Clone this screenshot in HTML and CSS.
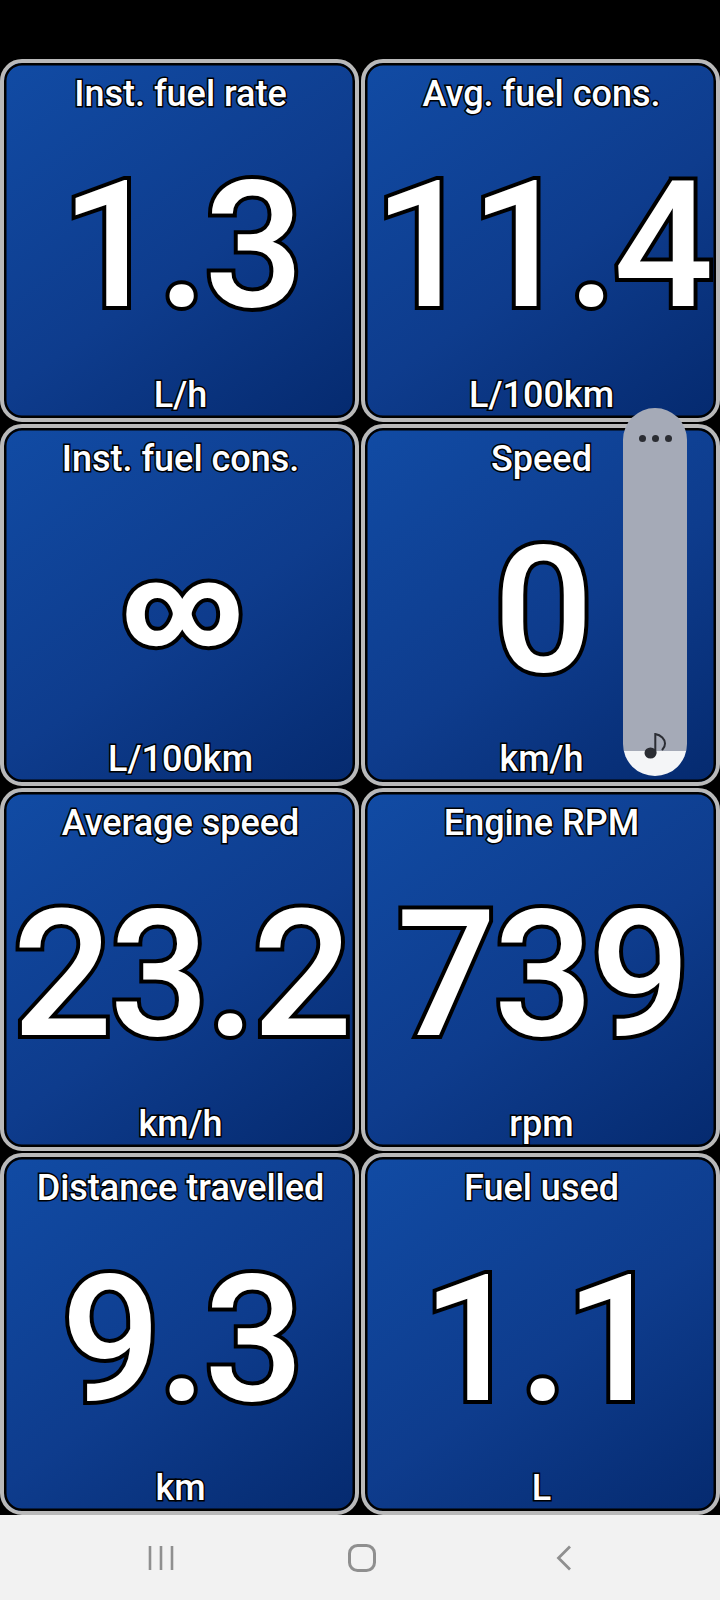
FILE: index.html
```html
<!DOCTYPE html>
<html lang="en">
<head>
    <meta charset="UTF-8" />
    <meta name="viewport" content="width=device-width, initial-scale=1.0" />
    <title>Dashboard</title>
    <link rel="stylesheet" href="styles.css">
</head>
<body>
    <div class="screen">
        <main class="grid">
            <section class="tile">
                <h2 class="label">Inst. fuel rate</h2>
                <p class="value">1.3</p>
                <p class="unit">L/h</p>
            </section>
            <section class="tile">
                <h2 class="label">Avg. fuel cons.</h2>
                <p class="value">11.4</p>
                <p class="unit">L/100km</p>
            </section>
            <section class="tile">
                <h2 class="label">Inst. fuel cons.</h2>
                <p class="value symbol">∞</p>
                <p class="unit">L/100km</p>
            </section>
            <section class="tile">
                <h2 class="label">Speed</h2>
                <p class="value">0</p>
                <p class="unit">km/h</p>
            </section>
            <section class="tile">
                <h2 class="label">Average speed</h2>
                <p class="value">23.2</p>
                <p class="unit">km/h</p>
            </section>
            <section class="tile">
                <h2 class="label">Engine RPM</h2>
                <p class="value">739</p>
                <p class="unit">rpm</p>
            </section>
            <section class="tile">
                <h2 class="label">Distance travelled</h2>
                <p class="value">9.3</p>
                <p class="unit">km</p>
            </section>
            <section class="tile">
                <h2 class="label">Fuel used</h2>
                <p class="value">1.1</p>
                <p class="unit">L</p>
            </section>
        </main>

        <aside class="panel">
            <div class="dots"><span></span><span></span><span></span></div>
            <svg class="note" viewBox="0 0 22 26" width="22" height="26">
                <ellipse cx="6.5" cy="20" rx="6" ry="5.6" fill="#2b2d33"/>
                <path d="M11.3 20V1C17 2 21 6 21 10.5C21 13 20 15 18.5 16.5" fill="none" stroke="#2b2d33" stroke-width="2" stroke-linecap="round"/>
            </svg>
        </aside>

        <nav class="navbar">
            <svg viewBox="0 0 26 26" width="26" height="26">
                <path d="M2 1V25M13 1V25M24 1V25" fill="none" stroke="#8f8f8f" stroke-width="2.6"/>
            </svg>
            <svg class="home" viewBox="0 0 28 28" width="28" height="28">
                <rect x="1.5" y="1.5" width="25" height="25" rx="8" fill="none" stroke="#8f8f8f" stroke-width="3"/>
            </svg>
            <svg viewBox="0 0 16 26" width="16" height="26">
                <path d="M14 1.5L2.5 13L14 24.5" fill="none" stroke="#8f8f8f" stroke-width="2.8"/>
            </svg>
        </nav>
    </div>
</body>
</html>
```

FILE: styles.css
```css
* {
  box-sizing: border-box;
}

body,
h2,
p {
  margin: 0;
  padding: 0;
}

body {
  background-color: #000;
  font-family: 'Roboto', 'Liberation Sans', sans-serif;
}

.screen {
  position: relative;
  width: 720px;
  height: 1600px;
  padding-top: 59px;
  display: flex;
  flex-direction: column;
}

.grid {
  display: grid;
  grid-template-columns: 1fr 1fr;
  grid-template-rows: repeat(4, 1fr);
  gap: 2px;
  flex: 1;
}

.tile {
  display: flex;
  flex-direction: column;
  align-items: center;
  justify-content: space-between;
  padding: 10px 0 2px;
  overflow: hidden;
  border: 4px solid #b9b9b9;
  border-radius: 22px;
  box-shadow: inset 0 0 0 2.5px #000;
  background: linear-gradient(145deg, #114ba4 0%, #0e3c8d 55%, #052a6f 100%);
  color: #fff;
  text-align: center;
  white-space: nowrap;
  paint-order: stroke fill;
}

.label,
.unit {
  padding-left: 2px;
  font-size: 36px;
  font-weight: 500;
  line-height: 42px;
  -webkit-text-stroke: 3px #000;
}

.value {
  margin-top: 4px;
  padding-left: 3px;
  font-size: 176px;
  font-weight: 500;
  line-height: 200px;
  letter-spacing: -3px;
  -webkit-text-stroke: 8px #000;
}

.symbol {
  margin-top: -8px;
  padding-left: 6px;
  font-size: 116px;
  font-weight: 900;
  letter-spacing: 0;
}

.panel {
  position: absolute;
  left: 623px;
  top: 408px;
  width: 64px;
  height: 368px;
  display: flex;
  flex-direction: column;
  align-items: center;
  justify-content: space-between;
  padding: 27px 0 17px;
  border-radius: 32px;
  background: linear-gradient(#a5aab7 0, #a5aab7 343px, #f4f5f7 343px);
}

.dots {
  display: flex;
  gap: 6px;
}

.dots span {
  width: 7px;
  height: 7px;
  border-radius: 50%;
  background-color: #2b2d33;
}

.navbar {
  height: 85px;
  flex: none;
  display: flex;
  align-items: center;
  background-color: #f2f2f2;
  padding: 0 148px;
  justify-content: space-between;
}

.home {
  margin-right: 6px;
}
```
